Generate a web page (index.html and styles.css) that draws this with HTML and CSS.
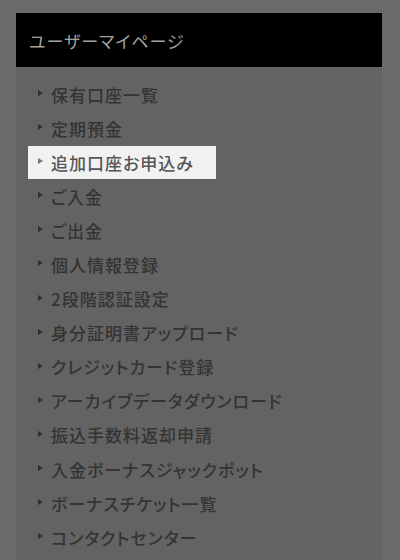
FILE: index.html
```html
<!DOCTYPE html>
<html lang="ja">
<head>
<meta charset="utf-8">
<link rel="stylesheet" href="styles.css">
</head>
<body>
<div class="menu">
  <div class="menu-head">ユーザーマイページ</div>
  <ul class="menu-list">
    <li><a class="item">保有口座一覧</a></li>
    <li><a class="item">定期預金</a></li>
    <li><a class="item active">追加口座お申込み</a></li>
    <li><a class="item">ご入金</a></li>
    <li><a class="item">ご出金</a></li>
    <li><a class="item">個人情報登録</a></li>
    <li><a class="item">2段階認証設定</a></li>
    <li><a class="item">身分証明書アップロード</a></li>
    <li><a class="item">クレジットカード登録</a></li>
    <li><a class="item">アーカイブデータダウンロード</a></li>
    <li><a class="item">振込手数料返却申請</a></li>
    <li><a class="item">入金ボーナスジャックポット</a></li>
    <li><a class="item">ボーナスチケット一覧</a></li>
    <li><a class="item">コンタクトセンター</a></li>
  </ul>
</div>
</body>
</html>
```
FILE: styles.css
```css
html, body {
  margin: 0;
  padding: 0;
  background: #6a6a6a;
  height: 100%;
  overflow: hidden;
}
body {
  font-family: "Noto Sans CJK JP", "Noto Sans", sans-serif;
}
.menu {
  margin: 13px 0 0 16px;
  width: 366px;
  background: #636363;
  min-height: 600px;
}
.menu-head {
  background: #000;
  color: #a2a2a2;
  height: 54px;
  display: flex;
  align-items: center;
  padding-left: 13px;
  font-size: 17px;
  letter-spacing: 1px;
  font-feature-settings: "palt";
}
.menu-list {
  list-style: none;
  margin: 0;
  padding: 10px 12px 0 12px;
}
.menu-list li {
  height: 34.1px;
}
.item {
  display: inline-flex;
  align-items: center;
  height: 33px;
  padding: 0 22px 0 10px;
  font-size: 17px;
  font-weight: 500;
  letter-spacing: 1px;
  font-feature-settings: "palt";
  color: #343434;
}
.item::before {
  content: "";
  width: 0;
  height: 0;
  border-top: 3.5px solid transparent;
  border-bottom: 3.5px solid transparent;
  border-left: 5px solid #303030;
  margin-right: 8px;
  margin-top: -2px;
}
.item.active {
  background: #f1f1f1;
  color: #555;
}
.item.active::before {
  border-left-color: #777;
}
```
